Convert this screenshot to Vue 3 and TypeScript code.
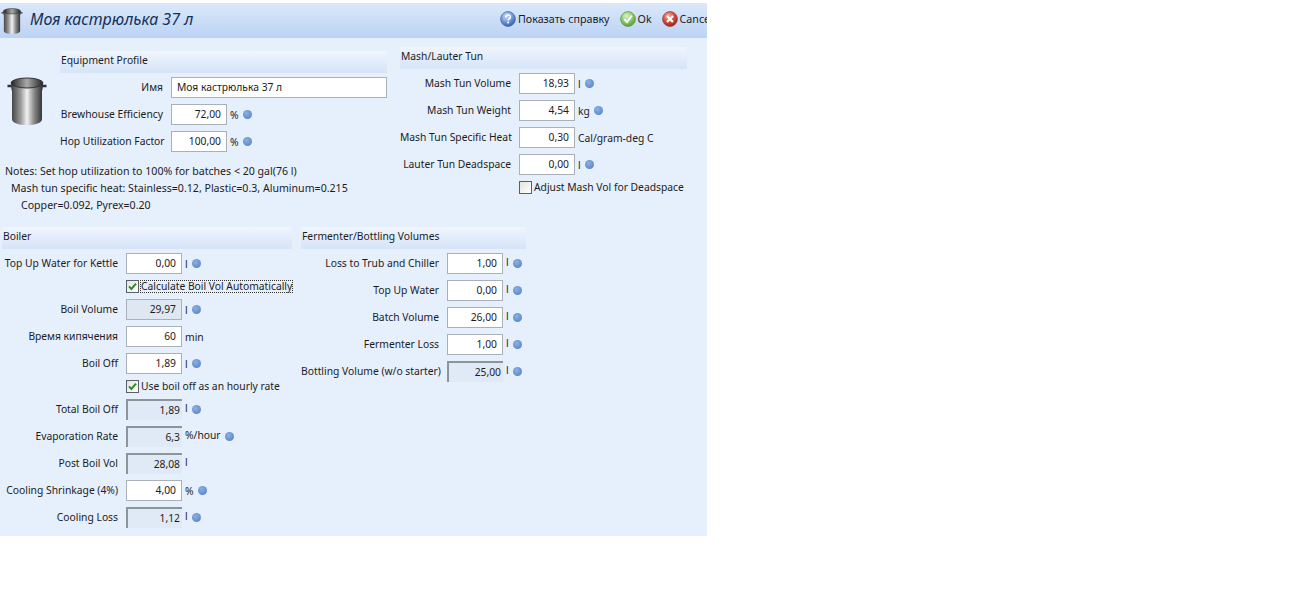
<script setup lang="ts">
interface Field {
  label: string
  value: string
  unit?: string
  dot?: boolean
  kind?: 'edit' | 'grey' | 'sunken'
  check?: { text: string; checked: boolean; focus?: boolean }
}

const profile: Field[] = [
  { label: 'Brewhouse Efficiency', value: '72,00', unit: '%', dot: true },
  { label: 'Hop Utilization Factor', value: '100,00', unit: '%', dot: true },
]
const mash: Field[] = [
  { label: 'Mash Tun Volume', value: '18,93', unit: 'l', dot: true },
  { label: 'Mash Tun Weight', value: '4,54', unit: 'kg', dot: true },
  { label: 'Mash Tun Specific Heat', value: '0,30', unit: 'Cal/gram-deg C' },
  { label: 'Lauter Tun Deadspace', value: '0,00', unit: 'l', dot: true, check: { text: 'Adjust Mash Vol for Deadspace', checked: false } },
]
const boiler: Field[] = [
  { label: 'Top Up Water for Kettle', value: '0,00', unit: 'l', dot: true, check: { text: 'Calculate Boil Vol Automatically', checked: true, focus: true } },
  { label: 'Boil Volume', value: '29,97', unit: 'l', dot: true, kind: 'grey' },
  { label: 'Время кипячения', value: '60', unit: 'min' },
  { label: 'Boil Off', value: '1,89', unit: 'l', dot: true, check: { text: 'Use boil off as an hourly rate', checked: true } },
  { label: 'Total Boil Off', value: '1,89', unit: 'l', dot: true, kind: 'sunken' },
  { label: 'Evaporation Rate', value: '6,3', unit: '%/hour', dot: true, kind: 'sunken' },
  { label: 'Post Boil Vol', value: '28,08', unit: 'l', kind: 'sunken' },
  { label: 'Cooling Shrinkage (4%)', value: '4,00', unit: '%', dot: true },
  { label: 'Cooling Loss', value: '1,12', unit: 'l', dot: true, kind: 'sunken' },
]
const ferm: Field[] = [
  { label: 'Loss to Trub and Chiller', value: '1,00', unit: 'l', dot: true },
  { label: 'Top Up Water', value: '0,00', unit: 'l', dot: true },
  { label: 'Batch Volume', value: '26,00', unit: 'l', dot: true },
  { label: 'Fermenter Loss', value: '1,00', unit: 'l', dot: true },
  { label: 'Bottling Volume (w/o starter)', value: '25,00', unit: 'l', dot: true, kind: 'sunken' },
]
const groups = { profile, mash, boiler, ferm }
</script>

<template>
  <div class="panel">
    <header class="top">
      <svg class="mini-pot" width="22" height="26" viewBox="0 0 40 48">
        <use href="#pot-shape" />
      </svg>
      <h1>Моя кастрюлька 37 л</h1>
      <div class="actions">
        <span class="act">
          <svg width="16" height="16" viewBox="0 0 16 16">
            <defs>
              <radialGradient id="gHelp" cx="40%" cy="30%" r="75%"><stop offset="0" stop-color="#cfe0fa" /><stop offset="0.55" stop-color="#6f96dc" /><stop offset="1" stop-color="#2c55a8" /></radialGradient>
            </defs>
            <circle cx="8" cy="8" r="7.4" fill="url(#gHelp)" stroke="#4a6fb5" stroke-width="0.8" />
            <path d="M5.8 6.2C5.9 4.6 7 4 8.1 4c1.3 0 2.3.8 2.3 2 0 1.7-2.2 1.7-2.2 3.5" fill="none" stroke="#fff" stroke-width="1.5" />
            <circle cx="8.1" cy="11.6" r="1" fill="#fff" />
          </svg>
          Показать справку
        </span>
        <span class="act">
          <svg width="16" height="16" viewBox="0 0 16 16">
            <defs>
              <radialGradient id="gOk" cx="40%" cy="30%" r="75%"><stop offset="0" stop-color="#d9f2c6" /><stop offset="0.55" stop-color="#8dc868" /><stop offset="1" stop-color="#4e9a34" /></radialGradient>
            </defs>
            <circle cx="8" cy="8" r="7.4" fill="url(#gOk)" stroke="#5d9a45" stroke-width="0.8" />
            <path d="M4.4 8.2 7 11l4.8-6.4" fill="none" stroke="#fff" stroke-width="2" />
          </svg>
          Ok
        </span>
        <span class="act">
          <svg width="16" height="16" viewBox="0 0 16 16">
            <defs>
              <radialGradient id="gNo" cx="40%" cy="30%" r="75%"><stop offset="0" stop-color="#f3b3a8" /><stop offset="0.55" stop-color="#cf4a3c" /><stop offset="1" stop-color="#962018" /></radialGradient>
            </defs>
            <circle cx="8" cy="8" r="7.4" fill="url(#gNo)" stroke="#a63a30" stroke-width="0.8" />
            <path d="M5 5l6 6M11 5l-6 6" fill="none" stroke="#fff" stroke-width="2.2" />
          </svg>
          Cancel
        </span>
      </div>
    </header>

    <div class="upper">
      <div class="col-profile">
        <div class="pot-cell">
          <svg width="40" height="48" viewBox="0 0 40 48">
            <defs>
              <linearGradient id="gBody" x1="0" x2="1" y1="0" y2="0">
                <stop offset="0" stop-color="#3c3c3c" />
                <stop offset="0.3" stop-color="#9a9a9a" />
                <stop offset="0.5" stop-color="#f2f2f2" />
                <stop offset="0.72" stop-color="#8a8a8a" />
                <stop offset="1" stop-color="#2c2c2c" />
              </linearGradient>
              <linearGradient id="gInner" x1="0" x2="1" y1="0" y2="0">
                <stop offset="0" stop-color="#222" />
                <stop offset="0.5" stop-color="#aaa" />
                <stop offset="1" stop-color="#222" />
              </linearGradient>
              <g id="pot-shape">
                <path d="M0.5 9h4.5M39.5 9h-4.5" stroke="#333" stroke-width="2.4" fill="none" />
                <path d="M4 6c0 6 1 8 1 8V42c0 4 7 6 15 6s15-2 15-6V14s1-2 1-8z" fill="url(#gBody)" />
                <ellipse cx="20" cy="6" rx="16" ry="5" fill="url(#gInner)" stroke="#333" stroke-width="1" />
              </g>
            </defs>
            <use href="#pot-shape" />
          </svg>
        </div>
        <section class="form profile">
          <h2>Equipment Profile</h2>
          <div class="row">
            <label>Имя</label>
            <div class="box wide">Моя кастрюлька 37 л</div>
          </div>
          <div v-for="f in groups.profile" :key="f.label" class="row">
            <label>{{ f.label }}</label>
            <div class="box num">{{ f.value }}</div>
            <span class="unit">{{ f.unit }}</span>
            <i v-if="f.dot" class="dot"></i>
          </div>
        </section>
      </div>
      <p class="notes">
        <span>Notes: Set hop utilization to 100% for batches &lt; 20 gal(76 l)</span>
        <span class="in1">Mash tun specific heat: Stainless=0.12, Plastic=0.3, Aluminum=0.215</span>
        <span class="in2">Copper=0.092, Pyrex=0.20</span>
      </p>

      <section class="form mash">
        <h2>Mash/Lauter Tun</h2>
        <template v-for="f in groups.mash" :key="f.label">
          <div class="row">
            <label>{{ f.label }}</label>
            <div class="box num">{{ f.value }}</div>
            <span class="unit">{{ f.unit }}</span>
            <i v-if="f.dot" class="dot"></i>
          </div>
          <div v-if="f.check" class="row check">
            <span class="tick"></span>
            <span class="check-text">{{ f.check.text }}</span>
          </div>
        </template>
      </section>
    </div>

    <div class="lower">
      <section class="form boiler">
        <h2>Boiler</h2>
        <template v-for="f in groups.boiler" :key="f.label">
          <div class="row">
            <label>{{ f.label }}</label>
            <div class="box num" :class="f.kind">{{ f.value }}</div>
            <span class="unit" :class="{ raised: f.kind === 'sunken' }">{{ f.unit }}</span>
            <i v-if="f.dot" class="dot"></i>
          </div>
          <div v-if="f.check" class="row check">
            <span class="tick">
              <svg v-if="f.check.checked" width="11" height="11" viewBox="0 0 11 11">
                <path d="M2 5.4 4.4 8 9 2.6" fill="none" stroke="#2f8a2f" stroke-width="2" />
              </svg>
            </span>
            <span class="check-text" :class="{ focus: f.check.focus }">{{ f.check.text }}</span>
          </div>
        </template>
      </section>

      <section class="form ferm">
        <h2>Fermenter/Bottling Volumes</h2>
        <div v-for="f in groups.ferm" :key="f.label" class="row">
          <label>{{ f.label }}</label>
          <div class="box num" :class="f.kind">{{ f.value }}</div>
          <span class="unit raised">{{ f.unit }}</span>
          <i v-if="f.dot" class="dot"></i>
        </div>
      </section>
    </div>
  </div>
</template>

<style>
html, body { background: #fff; }
</style>

<style scoped>
.panel {
  width: 707px;
  height: 533px;
  margin-top: 3px;
  background: #e6effc;
  overflow: hidden;
  font-family: "Noto Sans", "Liberation Sans", sans-serif;
  font-size: 10.3px;
  color: #1c1c1c;
}
.top {
  height: 35px;
  display: flex;
  align-items: center;
  background: linear-gradient(#dbe8fa, #bbd3f4);
}
.mini-pot { margin-left: 1px; flex: none; }
h1 {
  margin: 0 0 3px 7px;
  font-size: 16px;
  font-weight: 400;
  font-style: italic;
  color: #14305c;
}
.actions {
  margin-left: auto;
  display: flex;
  align-items: center;
  gap: 10px;
  width: 207px;
  height: 31px;
  margin-bottom: 4px;
  flex: none;
  white-space: nowrap;
  overflow: hidden;
  font-size: 10.7px;
}
.act { display: inline-flex; align-items: center; gap: 2px; flex: none; }
.upper {
  position: relative;
  display: grid;
  grid-template-columns: 400px 287px;
  grid-template-rows: auto 1fr;
  height: 189px;
}
.col-profile {
  display: flex;
  padding-top: 13px;
}
.pot-cell {
  width: 60px;
  flex: none;
  padding: 26px 0 0 7px;
  box-sizing: border-box;
}
.notes {
  grid-column: 1;
  grid-row: 2;
  margin: 5px 0 0 5px;
  line-height: 17px;
  font-size: 10.6px;
}
.notes span { display: block; }
.notes .in1 { padding-left: 6px; }
.notes .in2 { padding-left: 16px; }
.form h2 {
  margin: 0 0 4px;
  height: 22px;
  line-height: 18px;
  padding-left: 1px;
  font-size: 10.3px;
  font-weight: 400;
  background: linear-gradient(#f0f5fd, #d5e4f8);
}
.mash {
  grid-column: 2;
  grid-row: 1 / 3;
  padding-top: 9px;
  --label: 111px;
}
.profile { width: 327px; --label: 103px; }
.boiler { width: 292px; --label: 118px; }
.boiler h2 { margin-left: 2px; }
.ferm { width: 225px; margin-left: 9px; --label: 138px; }
.row {
  display: flex;
  align-items: center;
  height: 21px;
  margin-bottom: 6px;
  white-space: nowrap;
}
.row label {
  width: var(--label);
  margin-right: 8px;
  margin-top: -1px;
  text-align: right;
  flex: none;
}
.box {
  box-sizing: border-box;
  height: 21px;
  line-height: 19px;
  background: #fff;
  border: 1px solid #a9b0b8;
  padding: 0 5px;
}
.wide { width: 216px; }
.num { width: 56px; text-align: right; flex: none; }
.grey { background: #dfe7f3; }
.sunken {
  background: #e0e9f6;
  border-top: 2px solid #8c949c;
  border-left: 2px solid #8c949c;
  border-right: 0;
  border-bottom: 0;
  padding-right: 2px;
}
.unit { margin-left: 3px; }
.raised { margin-top: -4px; }
.dot {
  width: 9px;
  height: 9px;
  margin-left: 4px;
  border-radius: 50%;
  background: radial-gradient(circle at 40% 35%, #8db1e2, #4a7cc0);
  flex: none;
}
.check { height: 13px; padding-left: calc(var(--label) + 8px); }
.tick {
  box-sizing: border-box;
  width: 13px;
  height: 13px;
  margin-left: 0;
  border: 1px solid #5a6068;
  background: linear-gradient(135deg, #e4e4dc, #fff);
  display: flex;
  align-items: center;
  justify-content: center;
  flex: none;
}
.check-text { margin-left: 1px; line-height: 13px; padding: 0 1px; }
.focus { outline: 1px dotted #333; outline-offset: -1px; }
.lower {
  display: flex;
}
</style>
